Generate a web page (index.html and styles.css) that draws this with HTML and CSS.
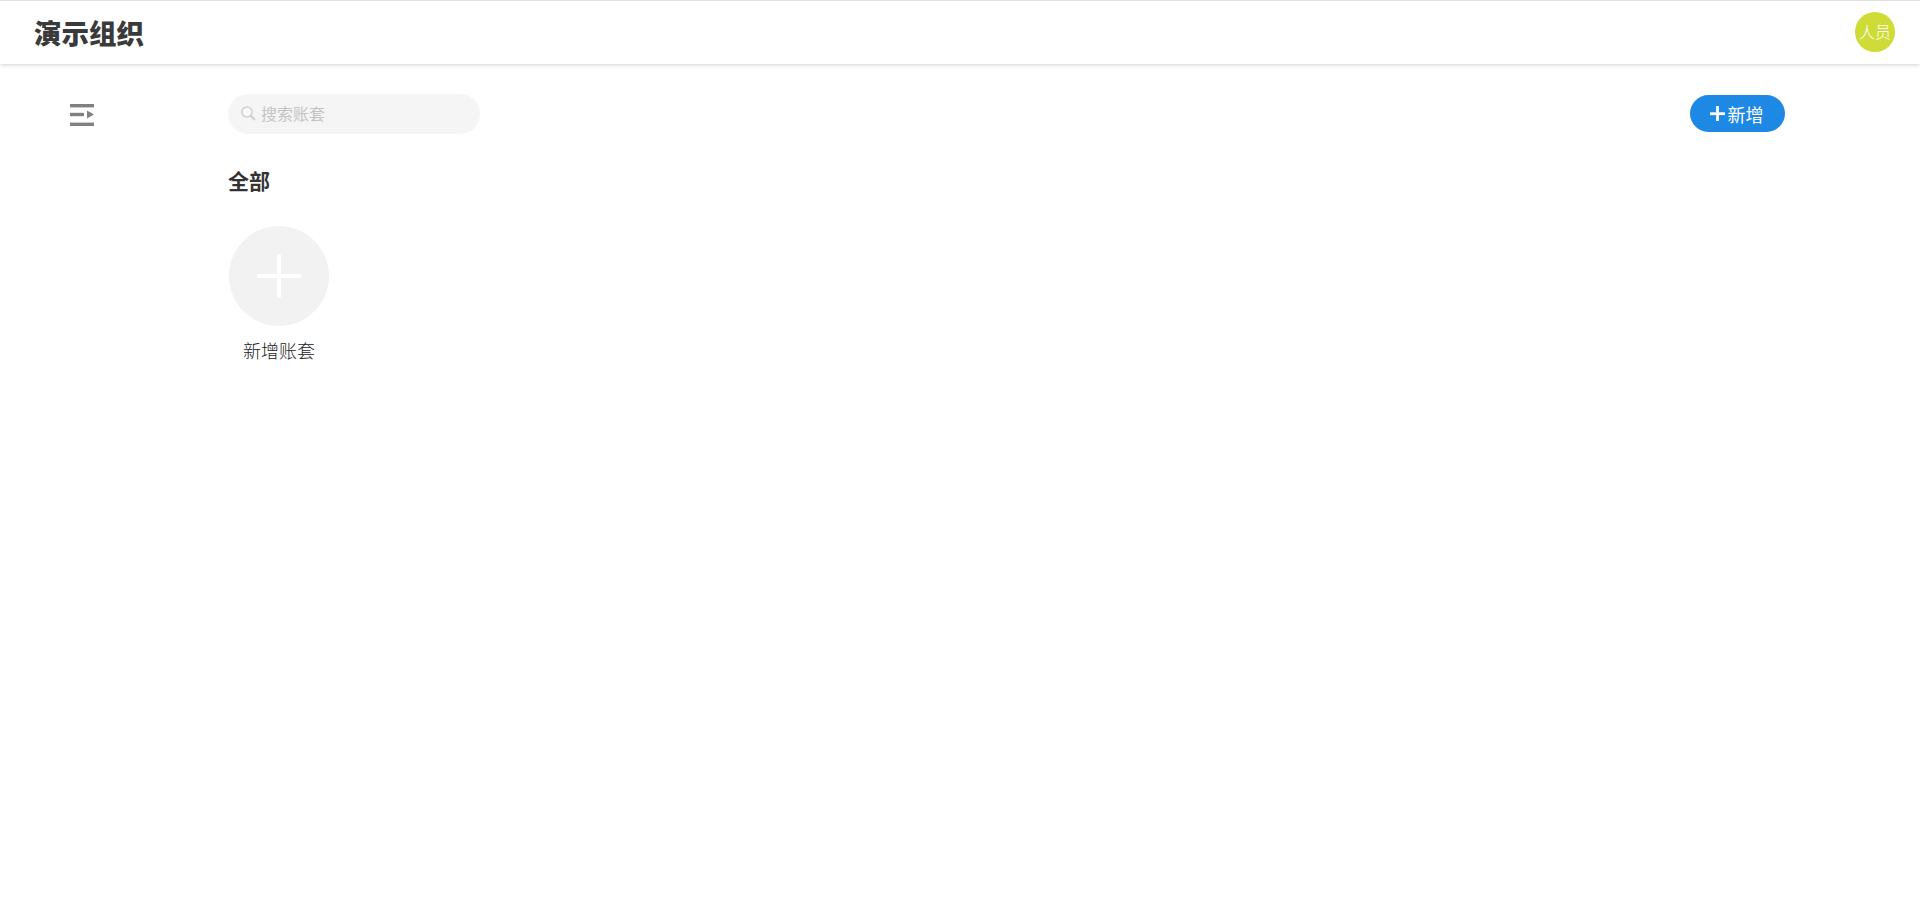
FILE: index.html
```html
<!DOCTYPE html>
<html lang="zh-CN">
<head>
    <meta charset="UTF-8">
    <title>演示组织</title>
    <link rel="stylesheet" href="styles.css">
</head>
<body>
    <div class="header">
        <div class="org-name">演示组织</div>
        <div class="avatar">人员</div>
    </div>
    <div class="page">
        <div class="side">
            <svg class="menu-icon" width="24" height="22" viewBox="0 0 24 22">
                <rect x="0" y="0" width="24" height="3.4" fill="#808080"/>
                <rect x="0" y="8.8" width="14" height="3.4" fill="#808080"/>
                <polygon points="17,6.5 24,10.5 17,14.5" fill="#808080"/>
                <rect x="0" y="18.6" width="24" height="3.4" fill="#808080"/>
            </svg>
        </div>
        <div class="main">
            <div class="toolbar">
                <div class="search">
                    <svg class="search-icon" width="15" height="15" viewBox="0 0 15 15">
                        <circle cx="6" cy="6" r="5" fill="#fafafa" stroke="#d2d2d2" stroke-width="1.6"/>
                        <line x1="9.5" y1="9.5" x2="14" y2="14" stroke="#cfcfcf" stroke-width="2.2"/>
                    </svg>
                    <span>搜索账套</span>
                </div>
                <div class="add-btn">
                    <svg width="16" height="16" viewBox="0 0 16 16">
                        <rect x="0" y="6.3" width="15" height="2.8" fill="#fff"/>
                        <rect x="6.1" y="0" width="2.8" height="15" fill="#fff"/>
                    </svg>
                    <span>新增</span>
                </div>
            </div>
            <div class="group-title">全部</div>
            <div class="item-list">
                <div class="item">
                    <div class="item-circle">
                        <svg width="44" height="44" viewBox="0 0 44 44">
                            <rect x="0" y="20" width="44" height="4" rx="1" fill="#fff"/>
                            <rect x="20" y="0" width="4" height="44" rx="1" fill="#fff"/>
                        </svg>
                    </div>
                    <div class="item-name">新增账套</div>
                </div>
            </div>
        </div>
    </div>
</body>
</html>
```

FILE: styles.css
```css
*{
    margin: 0;
    padding: 0;
    box-sizing: border-box;
}

body{
    height: 922px;
    overflow: hidden;
    background: #fff;
    color: #333;
    font-family: "Liberation Sans", "Noto Sans CJK SC", sans-serif;
}

.header{
    height: 64px;
    padding: 0 25px 1px 34px;
    display: flex;
    align-items: center;
    justify-content: space-between;
    border-top: 1px solid #e0e0e0;
    background: #fff;
    box-shadow: 0 1px 4px rgba(0,0,0,.18);
}

.org-name{
    font-size: 27.5px;
    font-weight: 900;
    color: #3a3a3a;
}

.avatar{
    width: 40px;
    height: 40px;
    border-radius: 50%;
    background: #cfdc38;
    color: #fff;
    font-size: 16px;
    font-weight: 300;
    line-height: 42px;
    text-align: center;
}

.page{
    display: flex;
}

.side{
    width: 228px;
    padding: 40px 0 0 70px;
    flex-shrink: 0;
}

.menu-icon{
    display: block;
}

.main{
    width: 1557px;
    padding-top: 30px;
}

.toolbar{
    height: 40px;
    display: flex;
    align-items: center;
    justify-content: space-between;
}

.search{
    width: 252px;
    height: 40px;
    padding: 0 0 2px 13px;
    display: flex;
    align-items: center;
    border-radius: 20px;
    background: #f5f5f5;
    color: #c4c4c4;
    font-size: 16px;
}

.search-icon{
    margin-right: 5px;
}

.add-btn{
    width: 95px;
    height: 37px;
    margin-top: -1px;
    padding-right: 2px;
    display: flex;
    align-items: center;
    justify-content: center;
    gap: 2px;
    border-radius: 19px;
    background: #1e88e5;
    color: #fff;
    font-size: 18px;
}

.group-title{
    margin-top: 33px;
    font-size: 21px;
    font-weight: bold;
    line-height: 30px;
}

.item-list{
    display: flex;
    margin-top: 29px;
}

.item{
    width: 102px;
    text-align: center;
}

.item-circle{
    width: 100px;
    height: 100px;
    margin: 0 auto;
    display: flex;
    align-items: center;
    justify-content: center;
    border-radius: 50%;
    background: #f2f2f2;
}

.item-name{
    margin-top: 13px;
    font-size: 18px;
    font-weight: 300;
    line-height: 26px;
    color: #222;
    white-space: nowrap;
}
```
